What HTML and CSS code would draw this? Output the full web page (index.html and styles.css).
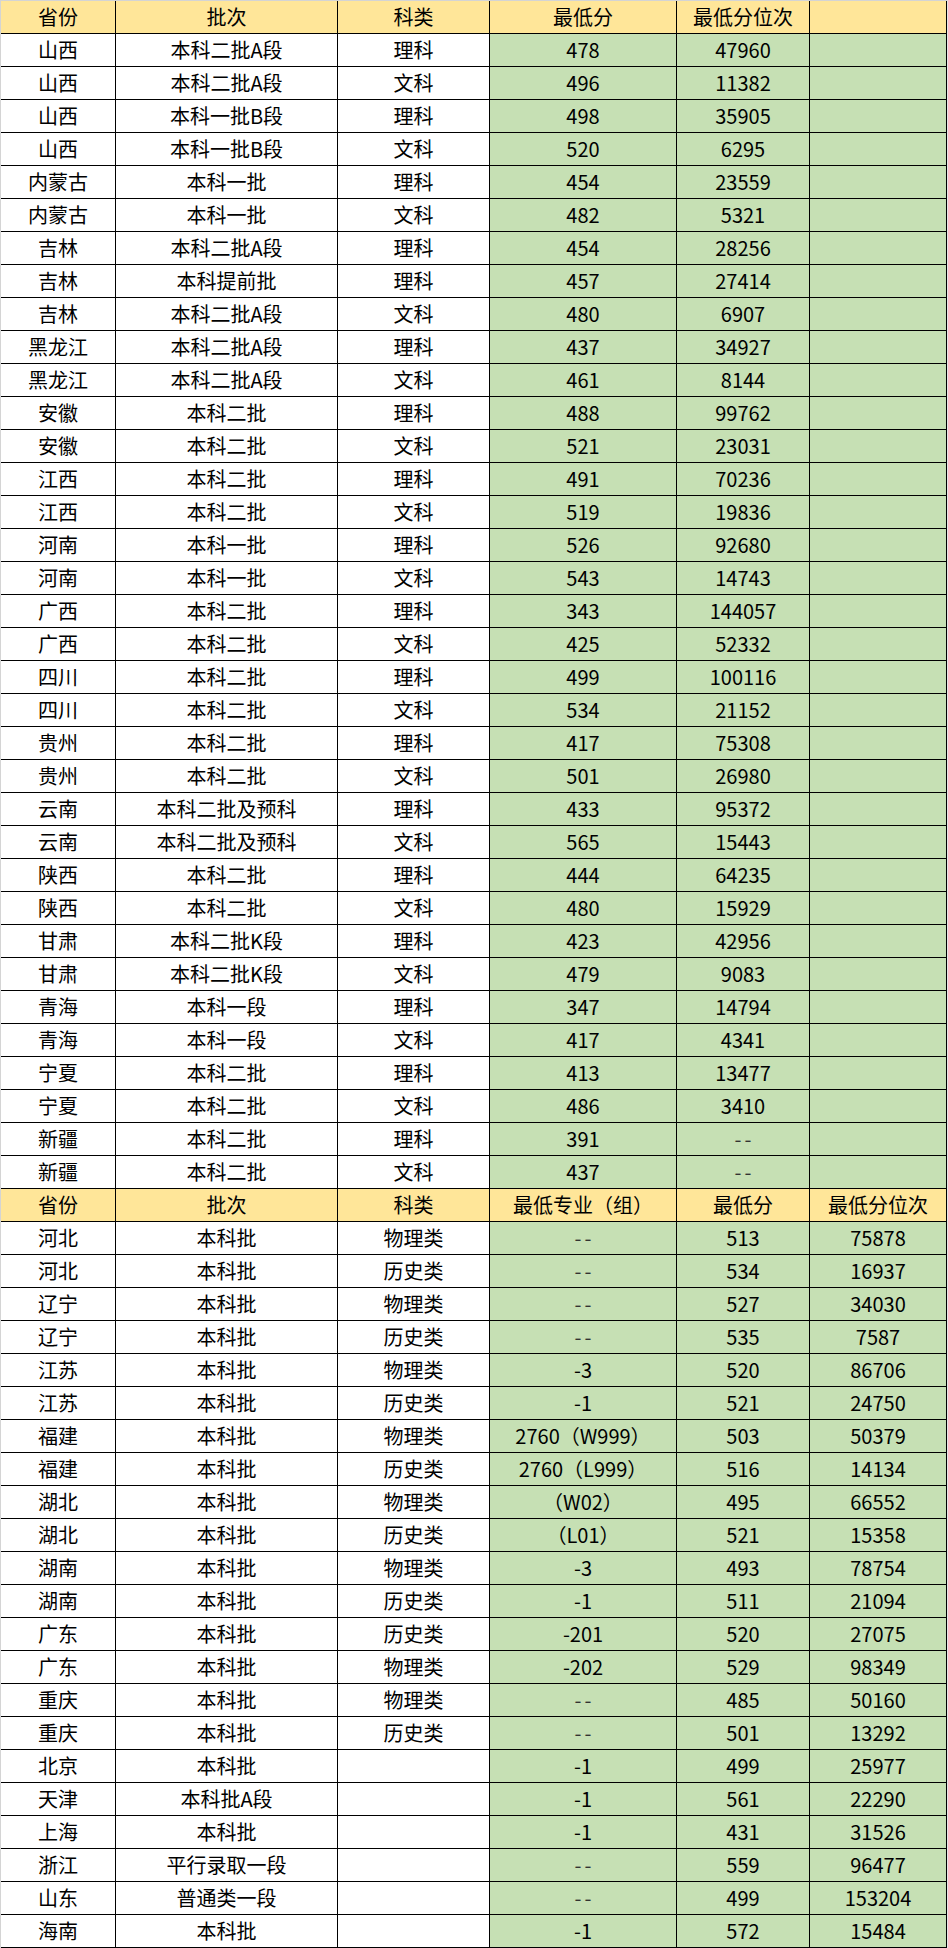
FILE: index.html
```html
<!DOCTYPE html>
<html lang="zh-CN">
<head>
<meta charset="utf-8">
<title>录取分数</title>
<link rel="stylesheet" href="styles.css">
</head>
<body>
<div class="sheet">
  <div class="row head"><div class="c">省份</div><div class="c">批次</div><div class="c">科类</div><div class="c">最低分</div><div class="c">最低分位次</div><div class="c"></div></div>
  <div class="row"><div class="c">山西</div><div class="c">本科二批A段</div><div class="c">理科</div><div class="c g">478</div><div class="c g">47960</div><div class="c g"></div></div>
  <div class="row"><div class="c">山西</div><div class="c">本科二批A段</div><div class="c">文科</div><div class="c g">496</div><div class="c g">11382</div><div class="c g"></div></div>
  <div class="row"><div class="c">山西</div><div class="c">本科一批B段</div><div class="c">理科</div><div class="c g">498</div><div class="c g">35905</div><div class="c g"></div></div>
  <div class="row"><div class="c">山西</div><div class="c">本科一批B段</div><div class="c">文科</div><div class="c g">520</div><div class="c g">6295</div><div class="c g"></div></div>
  <div class="row"><div class="c">内蒙古</div><div class="c">本科一批</div><div class="c">理科</div><div class="c g">454</div><div class="c g">23559</div><div class="c g"></div></div>
  <div class="row"><div class="c">内蒙古</div><div class="c">本科一批</div><div class="c">文科</div><div class="c g">482</div><div class="c g">5321</div><div class="c g"></div></div>
  <div class="row"><div class="c">吉林</div><div class="c">本科二批A段</div><div class="c">理科</div><div class="c g">454</div><div class="c g">28256</div><div class="c g"></div></div>
  <div class="row"><div class="c">吉林</div><div class="c">本科提前批</div><div class="c">理科</div><div class="c g">457</div><div class="c g">27414</div><div class="c g"></div></div>
  <div class="row"><div class="c">吉林</div><div class="c">本科二批A段</div><div class="c">文科</div><div class="c g">480</div><div class="c g">6907</div><div class="c g"></div></div>
  <div class="row"><div class="c">黑龙江</div><div class="c">本科二批A段</div><div class="c">理科</div><div class="c g">437</div><div class="c g">34927</div><div class="c g"></div></div>
  <div class="row"><div class="c">黑龙江</div><div class="c">本科二批A段</div><div class="c">文科</div><div class="c g">461</div><div class="c g">8144</div><div class="c g"></div></div>
  <div class="row"><div class="c">安徽</div><div class="c">本科二批</div><div class="c">理科</div><div class="c g">488</div><div class="c g">99762</div><div class="c g"></div></div>
  <div class="row"><div class="c">安徽</div><div class="c">本科二批</div><div class="c">文科</div><div class="c g">521</div><div class="c g">23031</div><div class="c g"></div></div>
  <div class="row"><div class="c">江西</div><div class="c">本科二批</div><div class="c">理科</div><div class="c g">491</div><div class="c g">70236</div><div class="c g"></div></div>
  <div class="row"><div class="c">江西</div><div class="c">本科二批</div><div class="c">文科</div><div class="c g">519</div><div class="c g">19836</div><div class="c g"></div></div>
  <div class="row"><div class="c">河南</div><div class="c">本科一批</div><div class="c">理科</div><div class="c g">526</div><div class="c g">92680</div><div class="c g"></div></div>
  <div class="row"><div class="c">河南</div><div class="c">本科一批</div><div class="c">文科</div><div class="c g">543</div><div class="c g">14743</div><div class="c g"></div></div>
  <div class="row"><div class="c">广西</div><div class="c">本科二批</div><div class="c">理科</div><div class="c g">343</div><div class="c g">144057</div><div class="c g"></div></div>
  <div class="row"><div class="c">广西</div><div class="c">本科二批</div><div class="c">文科</div><div class="c g">425</div><div class="c g">52332</div><div class="c g"></div></div>
  <div class="row"><div class="c">四川</div><div class="c">本科二批</div><div class="c">理科</div><div class="c g">499</div><div class="c g">100116</div><div class="c g"></div></div>
  <div class="row"><div class="c">四川</div><div class="c">本科二批</div><div class="c">文科</div><div class="c g">534</div><div class="c g">21152</div><div class="c g"></div></div>
  <div class="row"><div class="c">贵州</div><div class="c">本科二批</div><div class="c">理科</div><div class="c g">417</div><div class="c g">75308</div><div class="c g"></div></div>
  <div class="row"><div class="c">贵州</div><div class="c">本科二批</div><div class="c">文科</div><div class="c g">501</div><div class="c g">26980</div><div class="c g"></div></div>
  <div class="row"><div class="c">云南</div><div class="c">本科二批及预科</div><div class="c">理科</div><div class="c g">433</div><div class="c g">95372</div><div class="c g"></div></div>
  <div class="row"><div class="c">云南</div><div class="c">本科二批及预科</div><div class="c">文科</div><div class="c g">565</div><div class="c g">15443</div><div class="c g"></div></div>
  <div class="row"><div class="c">陕西</div><div class="c">本科二批</div><div class="c">理科</div><div class="c g">444</div><div class="c g">64235</div><div class="c g"></div></div>
  <div class="row"><div class="c">陕西</div><div class="c">本科二批</div><div class="c">文科</div><div class="c g">480</div><div class="c g">15929</div><div class="c g"></div></div>
  <div class="row"><div class="c">甘肃</div><div class="c">本科二批K段</div><div class="c">理科</div><div class="c g">423</div><div class="c g">42956</div><div class="c g"></div></div>
  <div class="row"><div class="c">甘肃</div><div class="c">本科二批K段</div><div class="c">文科</div><div class="c g">479</div><div class="c g">9083</div><div class="c g"></div></div>
  <div class="row"><div class="c">青海</div><div class="c">本科一段</div><div class="c">理科</div><div class="c g">347</div><div class="c g">14794</div><div class="c g"></div></div>
  <div class="row"><div class="c">青海</div><div class="c">本科一段</div><div class="c">文科</div><div class="c g">417</div><div class="c g">4341</div><div class="c g"></div></div>
  <div class="row"><div class="c">宁夏</div><div class="c">本科二批</div><div class="c">理科</div><div class="c g">413</div><div class="c g">13477</div><div class="c g"></div></div>
  <div class="row"><div class="c">宁夏</div><div class="c">本科二批</div><div class="c">文科</div><div class="c g">486</div><div class="c g">3410</div><div class="c g"></div></div>
  <div class="row"><div class="c">新疆</div><div class="c">本科二批</div><div class="c">理科</div><div class="c g">391</div><div class="c g"><span class="dash">--</span></div><div class="c g"></div></div>
  <div class="row"><div class="c">新疆</div><div class="c">本科二批</div><div class="c">文科</div><div class="c g">437</div><div class="c g"><span class="dash">--</span></div><div class="c g"></div></div>

  <div class="row head"><div class="c">省份</div><div class="c">批次</div><div class="c">科类</div><div class="c">最低专业（组）</div><div class="c">最低分</div><div class="c">最低分位次</div></div>
  <div class="row"><div class="c">河北</div><div class="c">本科批</div><div class="c">物理类</div><div class="c g"><span class="dash">--</span></div><div class="c g">513</div><div class="c g">75878</div></div>
  <div class="row"><div class="c">河北</div><div class="c">本科批</div><div class="c">历史类</div><div class="c g"><span class="dash">--</span></div><div class="c g">534</div><div class="c g">16937</div></div>
  <div class="row"><div class="c">辽宁</div><div class="c">本科批</div><div class="c">物理类</div><div class="c g"><span class="dash">--</span></div><div class="c g">527</div><div class="c g">34030</div></div>
  <div class="row"><div class="c">辽宁</div><div class="c">本科批</div><div class="c">历史类</div><div class="c g"><span class="dash">--</span></div><div class="c g">535</div><div class="c g">7587</div></div>
  <div class="row"><div class="c">江苏</div><div class="c">本科批</div><div class="c">物理类</div><div class="c g">-3</div><div class="c g">520</div><div class="c g">86706</div></div>
  <div class="row"><div class="c">江苏</div><div class="c">本科批</div><div class="c">历史类</div><div class="c g">-1</div><div class="c g">521</div><div class="c g">24750</div></div>
  <div class="row"><div class="c">福建</div><div class="c">本科批</div><div class="c">物理类</div><div class="c g">2760（W999）</div><div class="c g">503</div><div class="c g">50379</div></div>
  <div class="row"><div class="c">福建</div><div class="c">本科批</div><div class="c">历史类</div><div class="c g">2760（L999）</div><div class="c g">516</div><div class="c g">14134</div></div>
  <div class="row"><div class="c">湖北</div><div class="c">本科批</div><div class="c">物理类</div><div class="c g">（W02）</div><div class="c g">495</div><div class="c g">66552</div></div>
  <div class="row"><div class="c">湖北</div><div class="c">本科批</div><div class="c">历史类</div><div class="c g">（L01）</div><div class="c g">521</div><div class="c g">15358</div></div>
  <div class="row"><div class="c">湖南</div><div class="c">本科批</div><div class="c">物理类</div><div class="c g">-3</div><div class="c g">493</div><div class="c g">78754</div></div>
  <div class="row"><div class="c">湖南</div><div class="c">本科批</div><div class="c">历史类</div><div class="c g">-1</div><div class="c g">511</div><div class="c g">21094</div></div>
  <div class="row"><div class="c">广东</div><div class="c">本科批</div><div class="c">历史类</div><div class="c g">-201</div><div class="c g">520</div><div class="c g">27075</div></div>
  <div class="row"><div class="c">广东</div><div class="c">本科批</div><div class="c">物理类</div><div class="c g">-202</div><div class="c g">529</div><div class="c g">98349</div></div>
  <div class="row"><div class="c">重庆</div><div class="c">本科批</div><div class="c">物理类</div><div class="c g"><span class="dash">--</span></div><div class="c g">485</div><div class="c g">50160</div></div>
  <div class="row"><div class="c">重庆</div><div class="c">本科批</div><div class="c">历史类</div><div class="c g"><span class="dash">--</span></div><div class="c g">501</div><div class="c g">13292</div></div>
  <div class="row"><div class="c">北京</div><div class="c">本科批</div><div class="c"></div><div class="c g">-1</div><div class="c g">499</div><div class="c g">25977</div></div>
  <div class="row"><div class="c">天津</div><div class="c">本科批A段</div><div class="c"></div><div class="c g">-1</div><div class="c g">561</div><div class="c g">22290</div></div>
  <div class="row"><div class="c">上海</div><div class="c">本科批</div><div class="c"></div><div class="c g">-1</div><div class="c g">431</div><div class="c g">31526</div></div>
  <div class="row"><div class="c">浙江</div><div class="c">平行录取一段</div><div class="c"></div><div class="c g"><span class="dash">--</span></div><div class="c g">559</div><div class="c g">96477</div></div>
  <div class="row"><div class="c">山东</div><div class="c">普通类一段</div><div class="c"></div><div class="c g"><span class="dash">--</span></div><div class="c g">499</div><div class="c g">153204</div></div>
  <div class="row"><div class="c">海南</div><div class="c">本科批</div><div class="c"></div><div class="c g">-1</div><div class="c g">572</div><div class="c g">15484</div></div>
</div>
</body>
</html>
```

FILE: styles.css
```css
html, body {
  margin: 0;
  padding: 0;
  background: #ffffff;
}

.sheet {
  width: 948px;
  box-sizing: border-box;
  border-top: 1px solid #d4d4d4;
  border-left: 1px solid #d4d4d4;
  border-right: 1px solid #e6e6e6;
  font-family: "Noto Sans CJK SC", "Noto Sans", sans-serif;
  font-size: 20px;
  color: #000000;
}

.row {
  display: grid;
  grid-template-columns: 115px 222px 152px 187px 133px 137px;
  height: 33px;
  box-sizing: border-box;
  border-bottom: 1px solid #000000;
}

.c {
  display: flex;
  align-items: center;
  justify-content: center;
  box-sizing: border-box;
  border-right: 1px solid #000000;
  background: #ffffff;
  white-space: nowrap;
  line-height: 1;
}

.g {
  background: #c6e0b4;
}

.head .c {
  background: #ffe699;
}

.dash {
  letter-spacing: 3px;
  margin-right: -3px;
  color: #333333;
}
```
